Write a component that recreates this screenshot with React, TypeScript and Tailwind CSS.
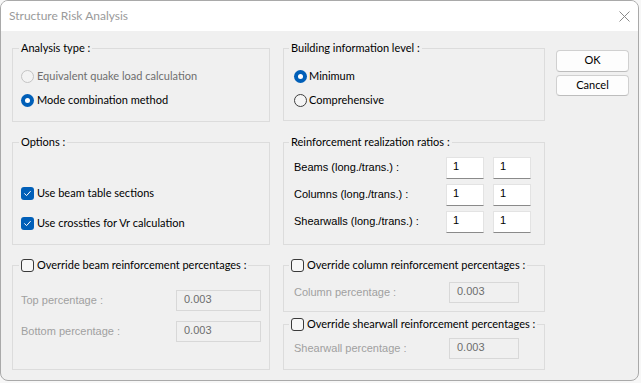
import React from "react";

const ui = "font-['Lato',sans-serif] text-[11px]";
const tah = "font-['Liberation_Sans',Arial,sans-serif] text-[11px]";

function Group({
  label,
  className,
  legendLeft = "left-[6px]",
  children,
}: {
  label: React.ReactNode;
  className: string;
  legendLeft?: string;
  children?: React.ReactNode;
}) {
  return (
    <div className={`relative border border-[#dcdcdc] ${className}`}>
      <div className={`absolute -top-[8px] ${legendLeft} flex h-[14px] items-center bg-[#f0f0f0] px-[2px] leading-[14px] text-black`}>
        {label}
      </div>
      {children}
    </div>
  );
}

function Radio({ checked, disabled }: { checked?: boolean; disabled?: boolean }) {
  if (checked)
    return (
      <span className="flex h-[13px] w-[13px] shrink-0 items-center justify-center rounded-full bg-[#005fb8]">
        <span className="h-[5px] w-[5px] rounded-full bg-white" />
      </span>
    );
  return (
    <span
      className={`h-[13px] w-[13px] shrink-0 rounded-full border ${
        disabled ? "border-[#c4c4c4] bg-[#f3f3f3]" : "border-[#3f3f3f] bg-[#f5f5f5]"
      }`}
    />
  );
}

function Check({ checked }: { checked?: boolean }) {
  if (checked)
    return (
      <span className="flex h-[13px] w-[13px] shrink-0 items-center justify-center rounded-[3px] bg-[#005fb8]">
        <svg width="9" height="9" viewBox="0 0 9 9" fill="none">
          <path d="M1.6 4.7 L3.6 6.6 L7.4 2.4" stroke="white" strokeWidth="1" strokeLinecap="round" strokeLinejoin="round" />
        </svg>
      </span>
    );
  return <span className="h-[13px] w-[13px] shrink-0 rounded-[3px] border border-[#3a3a3a] bg-[#f7f7f7]" />;
}

function Edit({ value, w }: { value: string; w: string }) {
  return (
    <div className={`${w} flex h-[22px] items-center border border-[#e3e3e3] border-b-[#8a8a8a] bg-white pb-[3px] pl-[6px] ${tah} text-black`}>
      {value}
    </div>
  );
}

function DisEdit({ value, w }: { value: string; w: string }) {
  return (
    <div className={`${w} flex h-[21px] items-center border border-[#d8d8d8] bg-[#f0f0f0] pb-[2px] pl-[7px] ${tah} text-[#6d6d6d]`}>
      {value}
    </div>
  );
}

export default function App() {
  return (
    <div className={`h-[383px] w-[641px] bg-[#f7f7f7] ${ui}`}>
      <div className="flex h-[381px] w-[639px] flex-col overflow-hidden rounded-[8px] border border-[#a9a9a9] bg-[#f0f0f0]">
        {/* Title bar */}
        <div className="flex h-[30px] shrink-0 items-center justify-between bg-white pl-[8px] pr-[8px]">
          <span className="text-[12px] text-[#9a9a9a]">Structure Risk Analysis</span>
          <svg width="11" height="11" viewBox="0 0 11 11">
            <path d="M0.5 0.5 L10.5 10.5 M10.5 0.5 L0.5 10.5" stroke="#8a8a8a" strokeWidth="1" />
          </svg>
        </div>

        {/* Body */}
        <div className="flex pl-[11px] pt-[17px] text-black">
          {/* Left column */}
          <div className="flex w-[258px] flex-col">
            <Group label="Analysis type :" className="h-[74px]">
              <div className="flex flex-col pl-[8px] pt-[15px]">
                <div className="flex h-[24px] items-center gap-[3px] text-[#6e6e6e]">
                  <Radio disabled />
                  <span>Equivalent quake load calculation</span>
                </div>
                <div className="flex h-[24px] items-center gap-[3px]">
                  <Radio checked />
                  <span>Mode combination method</span>
                </div>
              </div>
            </Group>

            <Group label="Options :" className="mt-[20px] h-[103px]">
              <div className="flex flex-col pl-[8px] pt-[35px]">
                <div className="flex h-[30px] items-center gap-[3px]">
                  <Check checked />
                  <span>Use beam table sections</span>
                </div>
                <div className="flex h-[30px] items-center gap-[3px]">
                  <Check checked />
                  <span>Use crossties for Vr calculation</span>
                </div>
              </div>
            </Group>

            <Group
              label={
                <span className="flex items-center gap-[3px]">
                  <Check />
                  <span>Override beam reinforcement percentages :</span>
                </span>
              }
              className="mt-[20px] h-[105px]"
            >
              <div className="flex flex-col gap-[10px] pl-[8px] pt-[24px]">
                <div className="flex h-[21px] items-center">
                  <span className={`w-[155px] ${tah} text-[#a0a0a0]`}>Top percentage :</span>
                  <DisEdit value="0.003" w="w-[85px]" />
                </div>
                <div className="flex h-[21px] items-center">
                  <span className={`w-[155px] ${tah} text-[#a0a0a0]`}>Bottom percentage :</span>
                  <DisEdit value="0.003" w="w-[85px]" />
                </div>
              </div>
            </Group>
          </div>

          {/* Right column */}
          <div className="ml-[13px] flex w-[262px] flex-col">
            <Group label="Building information level :" className="h-[73px]" legendLeft="left-[5px]">
              <div className="flex flex-col pl-[10px] pt-[15px]">
                <div className="flex h-[24px] items-center gap-[2px]">
                  <Radio checked />
                  <span>Minimum</span>
                </div>
                <div className="flex h-[24px] items-center gap-[2px]">
                  <Radio />
                  <span>Comprehensive</span>
                </div>
              </div>
            </Group>

            <Group label="Reinforcement realization ratios :" className="mt-[21px] h-[103px]" legendLeft="left-[5px]">
              <div className="flex flex-col gap-[5px] pl-[10px] pt-[14px]">
                {["Beams (long./trans.) :", "Columns (long./trans.) :", "Shearwalls (long./trans.) :"].map((l) => (
                  <div key={l} className="flex h-[22px] items-center">
                    <span className={`w-[152px] ${tah} pb-[1px]`}>{l}</span>
                    <Edit value="1" w="w-[38px]" />
                    <div className="w-[9px]" />
                    <Edit value="1" w="w-[38px]" />
                  </div>
                ))}
              </div>
            </Group>

            <Group
              label={
                <span className="flex items-center gap-[3px]">
                  <Check />
                  <span>Override column reinforcement percentages :</span>
                </span>
              }
              className="mt-[20px] h-[47px]"
              legendLeft="left-[5px]"
            >
              <div className="flex h-[21px] items-center pl-[10px] mt-[16px]">
                <span className={`w-[155px] ${tah} text-[#a0a0a0]`}>Column percentage :</span>
                <DisEdit value="0.003" w="w-[70px]" />
              </div>
            </Group>

            <Group
              label={
                <span className="flex items-center gap-[3px]">
                  <Check />
                  <span>Override shearwall reinforcement percentages :</span>
                </span>
              }
              className="mt-[12px] h-[46px]"
              legendLeft="left-[5px]"
            >
              <div className="flex h-[21px] items-center pl-[10px] mt-[13px]">
                <span className={`w-[155px] ${tah} text-[#a0a0a0]`}>Shearwall percentage :</span>
                <DisEdit value="0.003" w="w-[70px]" />
              </div>
            </Group>
          </div>

          {/* Buttons */}
          <div className="ml-[11px] mt-[2px] flex w-[73px] flex-col gap-[3px]">
            <button className="flex h-[22px] items-center justify-center rounded-[4px] border border-[#d0d0d0] border-b-[#bdbdbd] bg-[#fdfdfd] pb-[1px] text-black">
              OK
            </button>
            <button className="flex h-[21px] items-center justify-center rounded-[4px] border border-[#d0d0d0] border-b-[#bdbdbd] bg-[#fdfdfd] pb-[1px] text-black">
              Cancel
            </button>
          </div>
        </div>
      </div>
    </div>
  );
}
